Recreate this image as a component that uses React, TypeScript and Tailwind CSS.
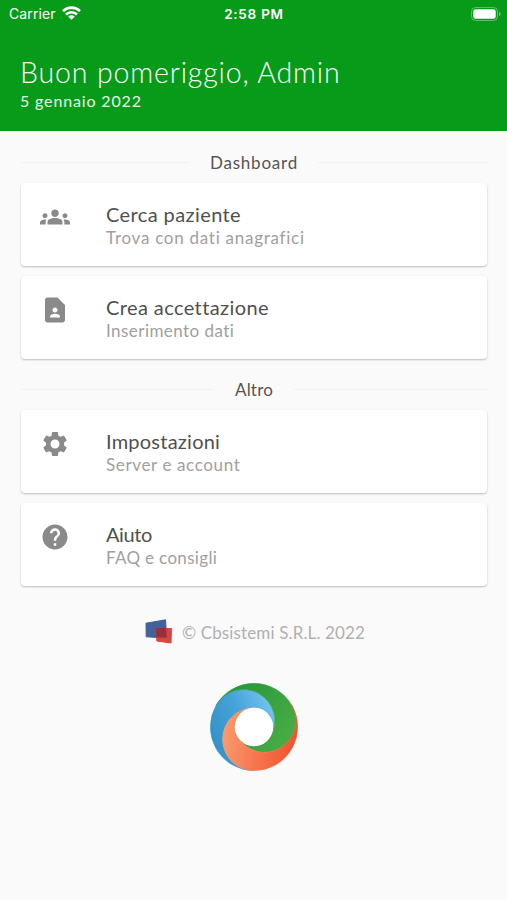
import React from 'react';
import type { IconType } from 'react-icons';
import { MdContactPage, MdGroups, MdHelp, MdSettings } from 'react-icons/md';

interface MenuItem {
  title: string;
  subtitle: string;
  icon: IconType;
  titleClass: string;
  subtitleClass: string;
}

const dashboardItems: MenuItem[] = [
  {
    title: 'Cerca paziente',
    subtitle: 'Trova con dati anagrafici',
    icon: MdGroups,
    titleClass: 'tracking-[0.4px]',
    subtitleClass: 'tracking-[0.73px]',
  },
  {
    title: 'Crea accettazione',
    subtitle: 'Inserimento dati',
    icon: MdContactPage,
    titleClass: 'tracking-[0.4px]',
    subtitleClass: 'tracking-[0.45px]',
  },
];

const otherItems: MenuItem[] = [
  {
    title: 'Impostazioni',
    subtitle: 'Server e account',
    icon: MdSettings,
    titleClass: 'tracking-[0.23px]',
    subtitleClass: 'tracking-[0.63px]',
  },
  {
    title: 'Aiuto',
    subtitle: 'FAQ e consigli',
    icon: MdHelp,
    titleClass: 'tracking-[-0.4px]',
    subtitleClass: 'tracking-[0.33px]',
  },
];

function StatusBar() {
  return (
    <div className="grid h-7 grid-cols-3 items-center pl-[9px] pr-[6px] font-['Inter',sans-serif] text-[14px] leading-7">
      <div className="flex items-center gap-[6px]">
        <span className="tracking-[0.1px]">Carrier</span>
        <svg className="-mt-[2px] h-[14px] w-[19px]" viewBox="0 0 19 14" fill="none" stroke="currentColor" strokeWidth="2.7">
          <path d="M1 5.1a12.2 12.2 0 0 1 17 0" />
          <path d="M4 8.500a7.900 7.900 0 0 1 11 0" />
          <path d="M9.500 13.800 6.200 10.700a4.500 4.500 0 0 1 6.600 0Z" fill="currentColor" stroke="none" />
        </svg>
      </div>
      <span className="-ml-[2px] text-center text-[13.5px] font-semibold tracking-[0.75px] whitespace-nowrap">2:58 PM</span>
      <svg className="-mt-px h-[14px] w-[30px] justify-self-end" viewBox="0 0 30 14">
        <rect x="0.5" y="0.5" width="26" height="13" rx="4" fill="none" stroke="white" strokeOpacity="0.35" />
        <rect x="2.3" y="2.2" width="22.4" height="9.6" rx="2.4" fill="white" />
        <path d="M28 5v4c1-.4 1.6-1.1 1.6-2S29 5.400 28 5Z" fill="white" fillOpacity="0.4" />
      </svg>
    </div>
  );
}

function SectionTitle({ label, className }: { label: string; className: string }) {
  return (
    <div className="flex h-6 items-center gap-[21px] text-[17px] text-[#555]">
      <div className="h-px flex-1 bg-[#f1f1f1]" />
      <span className={`pt-px leading-6 ${className}`}>{label}</span>
      <div className="h-px flex-1 bg-[#f1f1f1]" />
    </div>
  );
}

function MenuCard({ item }: { item: MenuItem }) {
  return (
    <div className="flex h-[83px] rounded bg-white pl-[19px] shadow-[0_1px_2px_rgba(0,0,0,0.25)]">
      <item.icon className="mt-[19px] size-[30px] shrink-0 text-[#8a8a8a]" />
      <div className="ml-[36px] pt-[19px]">
        <h2 className={`text-[20px] leading-6 text-[#505050] ${item.titleClass}`}>{item.title}</h2>
        <p className={`mt-px text-[17px] leading-[22px] text-[#a0a0a0] ${item.subtitleClass}`}>{item.subtitle}</p>
      </div>
    </div>
  );
}

function CompanyLogo() {
  return (
    <svg className="h-[26px] w-[28px]" viewBox="0 0 28 26">
      <path d="M1 4.200 20.600.8 21.600 19 1.200 17.800Z" fill="#41629b" stroke="#41629b" strokeLinejoin="round" />
      <path d="M11.500 9.500h15L26 24l-14.200-2Z" fill="#d9453f" stroke="#d9453f" strokeLinejoin="round" />
      <path d="M11 9h10.100l.8 9.800-10.700-.5Z" fill="#963039" />
    </svg>
  );
}

function SwirlLogo() {
  return (
    <svg className="size-[88px]" viewBox="-131 -131 262 262">
      <defs>
        <linearGradient id="blue" gradientUnits="userSpaceOnUse" x1="-120" y1="40" x2="60" y2="-30">
          <stop offset="0" stopColor="#3593ca" />
          <stop offset="0.5" stopColor="#45a3d9" />
          <stop offset="1" stopColor="#70c0ec" />
        </linearGradient>
        <linearGradient id="green" gradientUnits="userSpaceOnUse" x1="-80" y1="-100" x2="120" y2="30">
          <stop offset="0" stopColor="#27953b" />
          <stop offset="1" stopColor="#49ad45" />
        </linearGradient>
        <linearGradient id="orange" gradientUnits="userSpaceOnUse" x1="-90" y1="20" x2="130" y2="50">
          <stop offset="0" stopColor="#fb996d" />
          <stop offset="1" stopColor="#ee512c" />
        </linearGradient>
      </defs>
      {/* thin strokes close the seams between the three blades */}
      <path
        d="M-112.6-65A93.5 93.5 0 0 1 49.4 28.5A57 57 0 0 0 0-57A93.5 93.5 0 0 0 0 130A130 130 0 0 1-112.6-65Z"
        fill="url(#blue)"
        stroke="url(#blue)"
        strokeWidth="1.5"
      />
      <path
        d="M112.6-65A93.5 93.5 0 0 1-49.4 28.5A57 57 0 0 0 49.4 28.5A93.5 93.5 0 0 0-112.6-65A130 130 0 0 1 112.6-65Z"
        fill="url(#green)"
        stroke="url(#green)"
        strokeWidth="1.5"
      />
      <path
        d="M0 130A93.5 93.5 0 0 1 0-57A57 57 0 0 0-49.4 28.5A93.5 93.5 0 0 0 112.6-65A130 130 0 0 1 0 130Z"
        fill="url(#orange)"
        stroke="url(#orange)"
        strokeWidth="1.5"
      />
      <circle r="57" fill="white" />
    </svg>
  );
}

export default function App() {
  return (
    <div className="h-[900px] w-[507px] overflow-hidden bg-[#fafafa] font-['Lato',sans-serif]">
      {/* Header */}
      <header className="h-[131px] bg-[#089b19] text-white">
        <StatusBar />
        <div className="px-[20px] pt-[27px]">
          <h1 className="text-[28.5px] leading-[34px] font-light tracking-[0.85px]">Buon pomeriggio, Admin</h1>
          <p className="mt-px text-[16px] leading-[22px] tracking-[0.85px] text-white/90">5 gennaio 2022</p>
        </div>
      </header>

      {/* Menu */}
      <main className="pt-[19px] pr-[20px] pl-[21px]">
        <SectionTitle label="Dashboard" className="-mx-px tracking-[0.8px]" />
        <div className="mt-[9px] flex flex-col gap-[10px]">
          {dashboardItems.map(item => (
            <MenuCard key={item.title} item={item} />
          ))}
        </div>
        <div className="mt-[18px]">
          <SectionTitle label="Altro" className="tracking-[0.2px]" />
        </div>
        <div className="mt-[9px] flex flex-col gap-[10px]">
          {otherItems.map(item => (
            <MenuCard key={item.title} item={item} />
          ))}
        </div>
      </main>

      {/* Footer */}
      <footer className="flex flex-col items-center">
        <div className="mt-[33px] flex h-[26px] items-center gap-[9px] pl-[3px]">
          <CompanyLogo />
          <span className="pt-[2px] text-[17px] leading-6 tracking-[0.13px] text-[#b0b0b0]">© Cbsistemi S.R.L. 2022</span>
        </div>
        <div className="mt-[38px]">
          <SwirlLogo />
        </div>
      </footer>
    </div>
  );
}
